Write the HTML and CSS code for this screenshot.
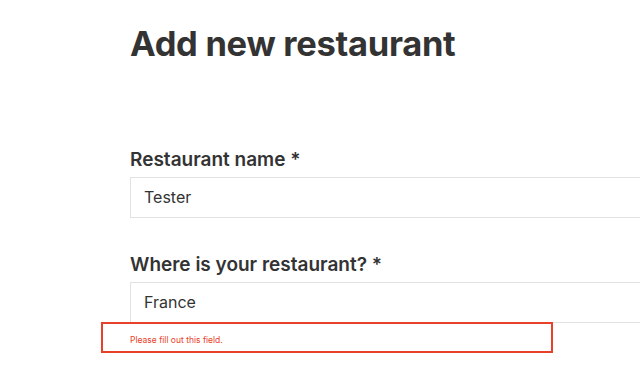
FILE: index.html
```html
<!DOCTYPE html>
<html>
<head>
<meta charset="utf-8">
<link rel="stylesheet" href="styles.css">
</head>
<body>
<main class="page">
  <h1 class="title">Add new restaurant</h1>
  <form class="form">
    <div class="field">
      <label class="label">Restaurant name *</label>
      <div class="input">Tester</div>
    </div>
    <div class="field">
      <label class="label">Where is your restaurant? *</label>
      <div class="input">France</div>
      <div class="error-box"><span class="error-text">Please fill out this field.</span></div>
    </div>
  </form>
</main>
</body>
</html>
```
FILE: styles.css
```css
html, body {
  margin: 0;
  padding: 0;
  background: #fff;
  overflow: hidden;
}
body {
  font-family: Inter, "Noto Sans", sans-serif;
  color: #333;
  width: 640px;
  height: 385px;
}
.page {
  padding-left: 130px;
  padding-top: 22px;
}
.title {
  margin: 0;
  font-size: 34.5px;
  font-weight: 700;
  line-height: 44px;
  letter-spacing: -0.3px;
  color: #333;
}
.form {
  margin-top: 76px;
  display: flex;
  flex-direction: column;
  gap: 29px;
}
.field {
  position: relative;
  display: flex;
  flex-direction: column;
}
.label {
  font-size: 19px;
  font-weight: 600;
  line-height: 28px;
  margin-top: 4px;
  margin-bottom: 3px;
  color: #333;
}
.input {
  width: 560px;
  height: 41px;
  box-sizing: border-box;
  border: 1px solid #e2e2e2;
  padding-left: 13px;
  font-size: 16px;
  line-height: 39px;
  color: #333;
}
.error-box {
  position: absolute;
  left: -29px;
  top: 75px;
  width: 452px;
  height: 31px;
  box-sizing: border-box;
  border: 2.5px solid #e8412a;
  background: #fff;
  padding-left: 27px;
  padding-top: 11px;
}
.error-text {
  display: block;
  font-size: 8.5px;
  line-height: 10px;
  color: #e8412a;
}
```
